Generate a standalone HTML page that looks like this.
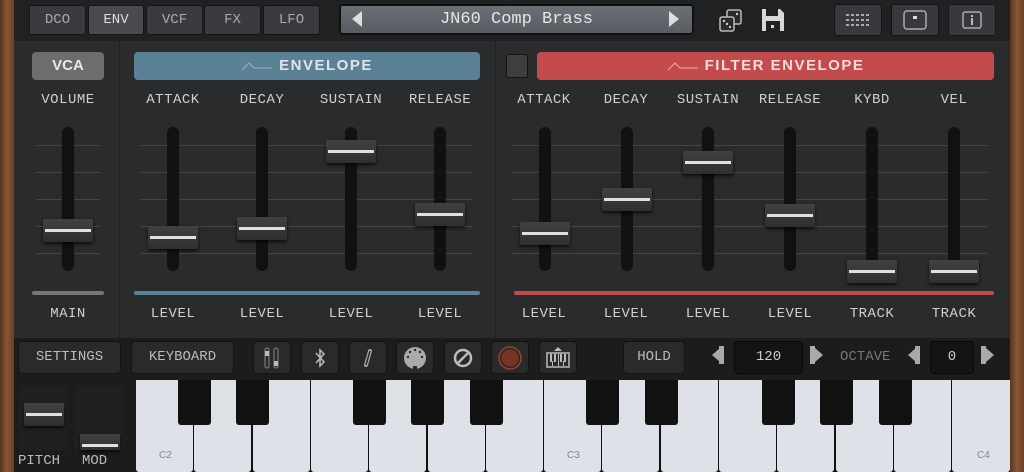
<!DOCTYPE html><html><head><meta charset="utf-8"><style>
*{margin:0;padding:0;box-sizing:border-box}
body{width:1024px;height:472px;overflow:hidden;background:#262729;font-family:"Liberation Mono","DejaVu Sans Mono",monospace;color:#c8c8c8;position:relative}
.a{position:absolute}
.wood{background:linear-gradient(90deg,#5a3420,#8a5636,#6b3e26)}
.tb{position:absolute;top:5px;height:30px;background:#3a3b3e;border:1px solid #151515;border-radius:3px;color:#aaa;font-size:14px;text-align:center;line-height:28px}
.lbl{position:absolute;font-size:14px;color:#cfcfcf;text-align:center;width:90px;letter-spacing:0.5px}
.trk{position:absolute;top:127px;width:12px;height:144px;background:#111;border-radius:6px}
.h{position:absolute;width:50px;height:23px;background:linear-gradient(#42413f,#302f2d);border-radius:2px;box-shadow:0 2px 3px rgba(0,0,0,.7)}
.h:after{content:"";position:absolute;left:2px;right:2px;top:10px;height:3px;background:#e0e0e0}
.gl{position:absolute;height:1px;background:#444548}
.bb{position:absolute;top:341px;height:33px;background:#2a2a2a;border:1px solid #141414;border-radius:4px;color:#bbb;font-size:14px;text-align:center;line-height:31px}
.w{position:absolute;top:380px;height:92px;width:57px;background:#dfe1e8;border-radius:0 0 3px 3px}
.k{position:absolute;top:380px;width:33px;height:45px;background:#111;border-radius:0 0 3px 3px}
.note{position:absolute;top:450px;font-size:10px;color:#888;font-family:"Liberation Sans",sans-serif}
</style></head><body>
<div class="a wood" style="left:0;top:0;width:14px;height:472px"></div>
<div class="a wood" style="left:1010px;top:0;width:14px;height:472px"></div>
<div class="a" style="left:14px;top:0;width:996px;height:41px;background:#202122"></div>
<div class="tb" style="left:29px;width:57px">DCO</div>
<div class="tb" style="left:88px;width:56px;background:#4a4b4f;color:#ddd">ENV</div>
<div class="tb" style="left:146px;width:57px">VCF</div>
<div class="tb" style="left:204px;width:57px">FX</div>
<div class="tb" style="left:263px;width:57px">LFO</div>
<div class="a" style="left:339px;top:4px;width:355px;height:31px;background:linear-gradient(#6b6f76,#595c62);border:2px solid #111;border-radius:4px;color:#e6e6e6;font-size:17px;text-align:center;line-height:27px">JN60 Comp Brass</div>
<div class="a" style="left:352px;top:11px;width:0;height:0;border-top:8px solid transparent;border-bottom:8px solid transparent;border-right:10px solid #ddd"></div>
<div class="a" style="left:669px;top:11px;width:0;height:0;border-top:8px solid transparent;border-bottom:8px solid transparent;border-left:10px solid #ddd"></div>
<svg class="a" style="left:718px;top:8px" width="26" height="26" viewBox="0 0 26 26"><rect x="9" y="2" width="14" height="14" rx="2" fill="#2a2a2a" stroke="#bbb" stroke-width="1.5"/><rect x="2" y="9" width="14" height="14" rx="2" fill="#2a2a2a" stroke="#bbb" stroke-width="1.5"/><circle cx="6" cy="13" r="1.2" fill="#ccc"/><circle cx="9" cy="16" r="1.2" fill="#ccc"/><circle cx="12" cy="19" r="1.2" fill="#ccc"/><circle cx="19" cy="6" r="1.2" fill="#ccc"/></svg>
<svg class="a" style="left:761px;top:8px" width="24" height="24" viewBox="0 0 24 24"><path d="M1 1H19L23 5V23H1Z" fill="#d8d8d8"/><rect x="5" y="1" width="12" height="7" fill="#202122"/><rect x="5" y="13" width="14" height="10" fill="#202122"/><rect x="10" y="17" width="3" height="3" fill="#d8d8d8"/></svg>
<div class="tb" style="left:834px;width:48px;top:4px;height:32px;background:#38393c"></div>
<div class="tb" style="left:891px;width:48px;top:4px;height:32px;background:#38393c"></div>
<div class="tb" style="left:948px;width:48px;top:4px;height:32px;background:#38393c"></div>
<svg class="a" style="left:845px;top:12px" width="26" height="16"><g fill="#aaa"><rect x="1" y="2" width="3" height="2"/><rect x="6" y="2" width="3" height="2"/><rect x="11" y="2" width="3" height="2"/><rect x="16" y="2" width="3" height="2"/><rect x="21" y="2" width="3" height="2"/><rect x="1" y="7" width="3" height="2"/><rect x="6" y="7" width="3" height="2"/><rect x="11" y="7" width="3" height="2"/><rect x="16" y="7" width="3" height="2"/><rect x="21" y="7" width="3" height="2"/><rect x="1" y="12" width="3" height="2"/><rect x="6" y="12" width="3" height="2"/><rect x="11" y="12" width="3" height="2"/><rect x="16" y="12" width="3" height="2"/><rect x="21" y="12" width="3" height="2"/></g></svg>
<svg class="a" style="left:902px;top:9px" width="26" height="22"><rect x="2" y="2" width="22" height="18" rx="3" fill="none" stroke="#aaa" stroke-width="1.5"/><rect x="11" y="7" width="4" height="3" fill="#ddd"/></svg>
<svg class="a" style="left:961px;top:10px" width="22" height="20"><rect x="2" y="2" width="18" height="16" rx="2" fill="none" stroke="#aaa" stroke-width="1.5"/><rect x="10" y="5" width="2" height="2" fill="#bbb"/><rect x="10" y="8" width="2" height="7" fill="#bbb"/></svg>

<div class="a" style="left:14px;top:41px;width:996px;height:297px;background:#2a2b2d"></div>
<div class="a" style="left:119px;top:41px;width:1px;height:297px;background:#1f2021"></div>
<div class="a" style="left:495px;top:41px;width:1px;height:297px;background:#1f2021"></div>

<div class="a" style="left:32px;top:52px;width:72px;height:28px;background:#6d6d6d;border-radius:4px;color:#e8e8e8;font:bold 15px 'Liberation Sans',sans-serif;text-align:center;line-height:28px">VCA</div>
<div class="a" style="left:134px;top:52px;width:346px;height:28px;background:#5b8196;border-radius:4px;color:#e0e4e8;font:bold 15px 'Liberation Sans',sans-serif;text-align:center;line-height:28px;letter-spacing:1.5px"><svg width="32" height="10" style="vertical-align:middle;margin-right:6px"><path d="M1 9L8 2L13 7H31" fill="none" stroke="#aac" stroke-width="1"/></svg>ENVELOPE</div>
<div class="a" style="left:506px;top:54px;width:22px;height:24px;background:#3e3e3e;border:1px solid #151515;border-radius:2px"></div>
<div class="a" style="left:537px;top:52px;width:457px;height:28px;background:#c44b4b;border-radius:4px;color:#ecdcdc;font:bold 15px 'Liberation Sans',sans-serif;text-align:center;line-height:28px;letter-spacing:1.5px"><svg width="32" height="10" style="vertical-align:middle;margin-right:6px"><path d="M1 9L8 2L13 7H31" fill="none" stroke="#e8b0b0" stroke-width="1"/></svg>FILTER ENVELOPE</div>

<div class="lbl" style="left:23px;top:92px">VOLUME</div>
<div class="lbl" style="left:128px;top:92px">ATTACK</div>
<div class="lbl" style="left:217px;top:92px">DECAY</div>
<div class="lbl" style="left:306px;top:92px">SUSTAIN</div>
<div class="lbl" style="left:395px;top:92px">RELEASE</div>
<div class="lbl" style="left:499px;top:92px">ATTACK</div>
<div class="lbl" style="left:581px;top:92px">DECAY</div>
<div class="lbl" style="left:663px;top:92px">SUSTAIN</div>
<div class="lbl" style="left:745px;top:92px">RELEASE</div>
<div class="lbl" style="left:827px;top:92px">KYBD</div>
<div class="lbl" style="left:909px;top:92px">VEL</div>

<div class="gl" style="left:36px;width:64px;top:145px"></div><div class="gl" style="left:36px;width:64px;top:172px"></div><div class="gl" style="left:36px;width:64px;top:199px"></div><div class="gl" style="left:36px;width:64px;top:226px"></div><div class="gl" style="left:36px;width:64px;top:253px"></div>
<div class="gl" style="left:141px;width:331px;top:145px"></div><div class="gl" style="left:141px;width:331px;top:172px"></div><div class="gl" style="left:141px;width:331px;top:199px"></div><div class="gl" style="left:141px;width:331px;top:226px"></div><div class="gl" style="left:141px;width:331px;top:253px"></div>
<div class="gl" style="left:512px;width:475px;top:145px"></div><div class="gl" style="left:512px;width:475px;top:172px"></div><div class="gl" style="left:512px;width:475px;top:199px"></div><div class="gl" style="left:512px;width:475px;top:226px"></div><div class="gl" style="left:512px;width:475px;top:253px"></div>

<div class="trk" style="left:62px"></div><div class="trk" style="left:167px"></div><div class="trk" style="left:256px"></div><div class="trk" style="left:345px"></div><div class="trk" style="left:434px"></div>
<div class="trk" style="left:539px"></div><div class="trk" style="left:621px"></div><div class="trk" style="left:702px"></div><div class="trk" style="left:784px"></div><div class="trk" style="left:866px"></div><div class="trk" style="left:948px"></div>

<div class="h" style="left:43px;top:219px"></div>
<div class="h" style="left:148px;top:226px"></div>
<div class="h" style="left:237px;top:217px"></div>
<div class="h" style="left:326px;top:140px"></div>
<div class="h" style="left:415px;top:203px"></div>
<div class="h" style="left:520px;top:222px"></div>
<div class="h" style="left:602px;top:188px"></div>
<div class="h" style="left:683px;top:151px"></div>
<div class="h" style="left:765px;top:204px"></div>
<div class="h" style="left:847px;top:260px"></div>
<div class="h" style="left:929px;top:260px"></div>

<div class="a" style="left:32px;top:291px;width:72px;height:4px;background:#777;border-radius:2px"></div>
<div class="a" style="left:134px;top:291px;width:346px;height:4px;background:#5b8196;border-radius:2px"></div>
<div class="a" style="left:514px;top:291px;width:480px;height:4px;background:#c44b4b;border-radius:2px"></div>

<div class="lbl" style="left:23px;top:306px">MAIN</div>
<div class="lbl" style="left:128px;top:306px">LEVEL</div>
<div class="lbl" style="left:217px;top:306px">LEVEL</div>
<div class="lbl" style="left:306px;top:306px">LEVEL</div>
<div class="lbl" style="left:395px;top:306px">LEVEL</div>
<div class="lbl" style="left:499px;top:306px">LEVEL</div>
<div class="lbl" style="left:581px;top:306px">LEVEL</div>
<div class="lbl" style="left:663px;top:306px">LEVEL</div>
<div class="lbl" style="left:745px;top:306px">LEVEL</div>
<div class="lbl" style="left:827px;top:306px">TRACK</div>
<div class="lbl" style="left:909px;top:306px">TRACK</div>

<div class="a" style="left:14px;top:338px;width:996px;height:42px;background:#1c1c1c"></div>
<div class="bb" style="left:18px;width:103px">SETTINGS</div>
<div class="bb" style="left:131px;width:103px">KEYBOARD</div>
<div class="bb" style="left:253px;width:38px"><svg width="20" height="24" style="margin-top:4px"><rect x="3" y="2" width="4" height="20" rx="2" fill="none" stroke="#888"/><rect x="12" y="2" width="4" height="20" rx="2" fill="none" stroke="#888"/><rect x="3" y="5" width="4" height="5" fill="#bbb"/><rect x="12" y="15" width="4" height="5" fill="#bbb"/></svg></div>
<div class="bb" style="left:301px;width:38px"><svg width="14" height="20" style="margin-top:6px"><path d="M3 5L11 14L7 18V2L11 6L3 15" fill="none" stroke="#bbb" stroke-width="1.5"/></svg></div>
<div class="bb" style="left:349px;width:38px"><svg width="14" height="20" style="margin-top:6px"><path d="M5 17L9 3" stroke="#aaa" stroke-width="4" stroke-linecap="round" fill="none"/><path d="M5 17L9 3" stroke="#2a2a2a" stroke-width="1.5" fill="none"/></svg></div>
<div class="bb" style="left:396px;width:38px"><svg width="24" height="24" style="margin-top:4px"><circle cx="12" cy="12" r="11" fill="#aaa"/><g fill="#2a2a2a"><circle cx="5" cy="11" r="1.2"/><circle cx="7" cy="6" r="1.2"/><circle cx="12" cy="4" r="1.2"/><circle cx="17" cy="6" r="1.2"/><circle cx="19" cy="11" r="1.2"/><rect x="10" y="20" width="4" height="3"/></g></svg></div>
<div class="bb" style="left:444px;width:38px"><svg width="20" height="20" style="margin-top:6px"><circle cx="10" cy="10" r="8" fill="none" stroke="#bbb" stroke-width="2.5"/><path d="M5 15L15 5" stroke="#bbb" stroke-width="2.5"/></svg></div>
<div class="bb" style="left:491px;width:38px"><svg width="24" height="24" style="margin-top:4px"><circle cx="12" cy="12" r="11" fill="none" stroke="#9a4230" stroke-width="1.5"/><circle cx="12" cy="12" r="8.5" fill="#7a3322"/></svg></div>
<div class="bb" style="left:539px;width:38px"><svg width="26" height="24" style="margin-top:3px"><path d="M9 6L13 2L17 6Z" fill="#bbb"/><rect x="2" y="8" width="22" height="14" fill="none" stroke="#bbb" stroke-width="1.5"/><g fill="#bbb"><rect x="5" y="9" width="2" height="8"/><rect x="9" y="9" width="2" height="8"/><rect x="15" y="9" width="2" height="8"/><rect x="19" y="9" width="2" height="8"/><rect x="13" y="9" width="1" height="12"/><rect x="7" y="16" width="1" height="5"/><rect x="18" y="16" width="1" height="5"/></g></svg></div>
<div class="bb" style="left:623px;width:62px">HOLD</div>
<div class="a" style="left:712px;top:348px;width:0;height:0;border-top:7px solid transparent;border-bottom:7px solid transparent;border-right:8px solid #aaa"></div><div class="a" style="left:719px;top:346px;width:5px;height:18px;background:#aaa"></div>
<div class="a" style="left:734px;top:341px;width:69px;height:33px;background:#141414;border:1px solid #080808;border-radius:4px;color:#ccc;font-size:14px;text-align:center;line-height:31px">120</div>
<div class="a" style="left:810px;top:346px;width:5px;height:18px;background:#aaa"></div><div class="a" style="left:815px;top:348px;width:0;height:0;border-top:7px solid transparent;border-bottom:7px solid transparent;border-left:8px solid #aaa"></div>
<div class="a" style="left:840px;top:349px;font-size:14px;color:#777">OCTAVE</div>
<div class="a" style="left:908px;top:348px;width:0;height:0;border-top:7px solid transparent;border-bottom:7px solid transparent;border-right:8px solid #aaa"></div><div class="a" style="left:915px;top:346px;width:5px;height:18px;background:#aaa"></div>
<div class="a" style="left:930px;top:341px;width:44px;height:33px;background:#141414;border:1px solid #080808;border-radius:4px;color:#ccc;font-size:14px;text-align:center;line-height:31px">0</div>
<div class="a" style="left:981px;top:346px;width:5px;height:18px;background:#aaa"></div><div class="a" style="left:986px;top:348px;width:0;height:0;border-top:7px solid transparent;border-bottom:7px solid transparent;border-left:8px solid #aaa"></div>

<div class="a" style="left:14px;top:380px;width:122px;height:92px;background:#1c1c1c"></div>
<div class="a" style="left:19px;top:386px;width:48px;height:64px;background:#202020"></div>
<div class="a" style="left:75px;top:386px;width:48px;height:64px;background:#202020"></div>
<div class="h" style="left:24px;top:403px;width:40px"></div>
<div class="h" style="left:80px;top:434px;width:40px;height:16px"></div>
<div class="a" style="left:18px;top:453px;font-size:14px;color:#bbb">PITCH</div>
<div class="a" style="left:82px;top:453px;font-size:14px;color:#bbb">MOD</div>
<div class="a" style="left:136px;top:380px;width:874px;height:92px;background:#111"></div>
<div class="w" style="left:136px"></div><div class="w" style="left:194px"></div><div class="w" style="left:253px"></div><div class="w" style="left:311px"></div><div class="w" style="left:369px"></div><div class="w" style="left:428px"></div><div class="w" style="left:486px"></div><div class="w" style="left:544px"></div><div class="w" style="left:602px"></div><div class="w" style="left:661px"></div><div class="w" style="left:719px"></div><div class="w" style="left:777px"></div><div class="w" style="left:836px"></div><div class="w" style="left:894px"></div><div class="w" style="left:952px;width:58px"></div>
<div class="k" style="left:178px"></div><div class="k" style="left:236px"></div><div class="k" style="left:353px"></div><div class="k" style="left:411px"></div><div class="k" style="left:470px"></div><div class="k" style="left:586px"></div><div class="k" style="left:645px"></div><div class="k" style="left:762px"></div><div class="k" style="left:820px"></div><div class="k" style="left:879px"></div>
<div class="note" style="left:159px">C2</div><div class="note" style="left:567px">C3</div><div class="note" style="left:977px">C4</div>
</body></html>
